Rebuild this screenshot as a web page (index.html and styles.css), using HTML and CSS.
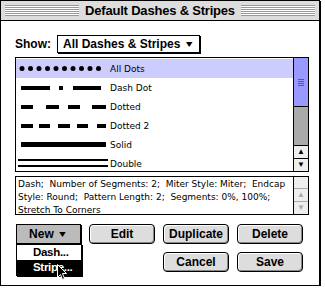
FILE: index.html
```html
<!DOCTYPE html>
<html lang="en">
<head>
    <meta charset="UTF-8" />
    <title>Default Dashes &amp; Stripes</title>
    <link rel="stylesheet" href="styles.css">
</head>
<body>
    <div class="window">
        <div class="titlebar">
            <div class="stripes"></div>
            <span class="title">Default Dashes &amp; Stripes</span>
            <div class="stripes"></div>
        </div>

        <div class="content">
            <div class="show-row">
                <span class="show-label">Show:</span>
                <div class="popup">All Dashes &amp; Stripes <span class="tri">&#9660;</span></div>
            </div>

            <div class="list">
                <div class="rows">
                    <div class="row selected">
                        <svg width="92" height="19"><g fill="#000">
                            <circle cx="6" cy="9.5" r="2.5"/><circle cx="14.5" cy="9.5" r="2.5"/><circle cx="23" cy="9.5" r="2.5"/><circle cx="31.5" cy="9.5" r="2.5"/><circle cx="40" cy="9.5" r="2.5"/><circle cx="48.5" cy="9.5" r="2.5"/><circle cx="57" cy="9.5" r="2.5"/><circle cx="65.5" cy="9.5" r="2.5"/><circle cx="74" cy="9.5" r="2.5"/><circle cx="82.5" cy="9.5" r="2.5"/>
                        </g></svg>
                        <span>All Dots</span>
                    </div>
                    <div class="row">
                        <svg width="92" height="19"><g fill="#000">
                            <rect x="5" y="8" width="29" height="4"/><rect x="43" y="8" width="4" height="4"/><rect x="57" y="8" width="28" height="4"/>
                        </g></svg>
                        <span>Dash Dot</span>
                    </div>
                    <div class="row">
                        <svg width="92" height="19"><g fill="#000">
                            <rect x="5" y="8" width="12" height="4"/><rect x="30" y="8" width="13" height="4"/><rect x="52" y="8" width="12" height="4"/><rect x="76" y="8" width="14" height="4"/>
                        </g></svg>
                        <span>Dotted</span>
                    </div>
                    <div class="row">
                        <svg width="92" height="19"><g fill="#000">
                            <rect x="5" y="8" width="12" height="4"/><rect x="23" y="8" width="11" height="4"/><rect x="42" y="8" width="12" height="4"/><rect x="61" y="8" width="11" height="4"/><rect x="81" y="8" width="9" height="4"/>
                        </g></svg>
                        <span>Dotted 2</span>
                    </div>
                    <div class="row">
                        <svg width="92" height="19"><rect x="5" y="7" width="85" height="5" fill="#000"/></svg>
                        <span>Solid</span>
                    </div>
                    <div class="row">
                        <svg width="92" height="19"><g fill="#000">
                            <rect x="2" y="5" width="90" height="2"/><rect x="2" y="11" width="90" height="2"/>
                        </g></svg>
                        <span>Double</span>
                    </div>
                </div>
                <div class="vscroll">
                    <div class="thumb"><span class="grip"></span></div>
                    <div class="track"></div>
                    <div class="arrow">&#9650;</div>
                    <div class="arrow">&#9660;</div>
                </div>
            </div>

            <div class="desc">
                <p class="desc-text">Dash;&nbsp; Number of Segments: 2;&nbsp; Miter Style: Miter;&nbsp; Endcap Style: Round;&nbsp; Pattern Length: 2;&nbsp; Segments: 0%, 100%; Stretch To Corners</p>
                <div class="vscroll off">
                    <div class="blank"></div>
                    <div class="arrow">&#9650;</div>
                    <div class="arrow">&#9660;</div>
                </div>
            </div>

            <div class="buttons">
                <div class="btn popup-btn">New <span class="tri">&#9660;</span></div>
                <div class="btn">Edit</div>
                <div class="btn">Duplicate</div>
                <div class="btn">Delete</div>
                <div class="spacer"></div>
                <div class="spacer"></div>
                <div class="btn">Cancel</div>
                <div class="btn">Save</div>
            </div>
        </div>

        <div class="menu">
            <div class="item">Dash...</div>
            <div class="item hot">Stripe...</div>
        </div>

        <svg class="cursor" width="11" height="17" viewBox="0 0 11 17">
            <path d="M0.5 0.5 L0.5 13.5 L3.5 10.5 L5.5 15.5 L7.5 14.5 L5.5 9.5 L9.5 9.5 Z" fill="#000" stroke="#fff" stroke-width="1"/>
        </svg>
    </div>
</body>
</html>
```

FILE: styles.css
```css
body {
    margin: 0;
    padding: 0;
    background: #fff;
    font-family: "Liberation Sans", Arial, sans-serif;
    color: #000;
}

.window {
    position: relative;
    width: 318px;
    height: 284px;
    border: 1px solid #000;
    box-shadow: 1px 1px 0 #000;
    background: #fff;
}

/* title bar */
.titlebar {
    display: flex;
    align-items: center;
    height: 19px;
    padding: 0 4px;
    background: #dddddd;
    border-bottom: 1px solid #000;
}

.stripes {
    flex: 1;
    height: 11px;
    background: repeating-linear-gradient(to bottom, #999 0, #999 1px, #fff 1px, #fff 2px);
}

.title {
    padding: 0 6px;
    font-size: 13px;
    font-weight: bold;
    letter-spacing: -0.2px;
}

.content {
    padding: 14px 10px 0 14px;
}

/* show popup */
.show-row {
    display: flex;
    align-items: center;
    height: 18px;
}

.show-label {
    font-size: 12px;
    font-weight: bold;
    width: 42px;
}

.popup {
    height: 16px;
    line-height: 16px;
    padding: 0 4px 0 5px;
    border: 1px solid #000;
    box-shadow: 1px 1px 0 #000;
    font-size: 12px;
    font-weight: bold;
}

.tri {
    font-size: 11px;
    vertical-align: 0;
    transform: scaleY(0.8);
    display: inline-block;
}

/* list */
.list {
    display: flex;
    height: 113px;
    margin-top: 4px;
    border: 1px solid #000;
}

.rows {
    flex: 1;
    padding-top: 1px;
}

.row {
    display: flex;
    align-items: center;
    height: 19px;
    font-family: "DejaVu Sans", sans-serif;
    font-size: 9px;
}

.row svg {
    flex: none;
    margin-right: 2px;
}

.row.selected {
    background: #ccccff;
}

.vscroll {
    display: flex;
    flex-direction: column;
    width: 14px;
    border-left: 1px solid #000;
}

.thumb {
    display: flex;
    align-items: center;
    justify-content: center;
    height: 48px;
    background: #9999ff;
    border-bottom: 1px solid #000;
}

.grip {
    width: 6px;
    height: 7px;
    background: repeating-linear-gradient(to bottom, #5555aa 0, #5555aa 1px, transparent 1px, transparent 2px);
}

.track {
    flex: 1;
    background: #aaaaaa;
}

.arrow {
    height: 12px;
    line-height: 12px;
    text-align: center;
    font-size: 8px;
    background: #eeeeee;
    border-top: 1px solid #000;
}

/* description */
.desc {
    display: flex;
    height: 37px;
    margin-top: 4px;
    border: 1px solid #000;
}

.desc-text {
    flex: 1;
    margin: 0;
    padding: 1px 2px;
    font-family: "DejaVu Sans", sans-serif;
    font-size: 9px;
    line-height: 13px;
}

.vscroll.off .blank {
    flex: 1;
    background: #eeeeee;
}

.vscroll.off .arrow {
    color: #aaa;
    border-top: 1px solid #aaa;
}

/* buttons */
.buttons {
    display: grid;
    grid-template-columns: 65px 66px 66px 66px;
    column-gap: 8px;
    row-gap: 8px;
    margin-top: 9px;
    margin-left: 1px;
}

.spacer {
    height: 19px;
}

.btn {
    height: 18px;
    line-height: 18px;
    text-align: center;
    border: 1px solid #000;
    border-radius: 4px;
    background: #dddddd;
    box-shadow: inset 1px 1px 0 #fff, inset -1px -1px 0 #888;
    font-size: 12px;
    font-weight: bold;
}

.popup-btn {
    border-radius: 0;
    background: #bbbbbb;
    box-shadow: 1px 1px 0 #000;
}

/* menu overlay */
.menu {
    position: absolute;
    left: 15px;
    top: 243px;
    width: 64px;
    border: 1px solid #000;
    box-shadow: 1px 1px 0 #000;
    background: #fff;
}

.item {
    height: 15px;
    line-height: 15px;
    padding-left: 16px;
    font-size: 11.5px;
    font-weight: bold;
    letter-spacing: -0.3px;
    white-space: nowrap;
}

.item.hot {
    background: #000;
    color: #fff;
}

.cursor {
    position: absolute;
    left: 56px;
    top: 263px;
}
```
